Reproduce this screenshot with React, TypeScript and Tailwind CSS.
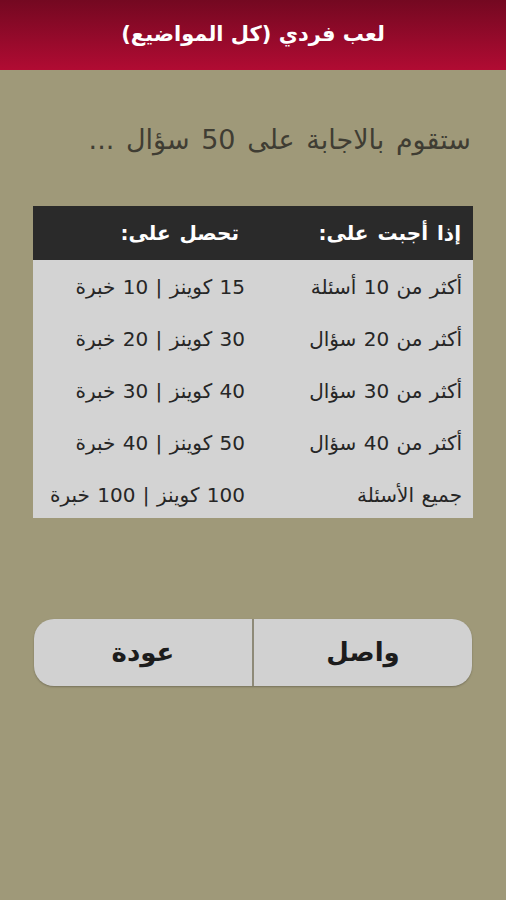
const rows = [
  { q: "أكثر من 10 أسئلة", r: "15 كوينز | 10 خبرة" },
  { q: "أكثر من 20 سؤال", r: "30 كوينز | 20 خبرة" },
  { q: "أكثر من 30 سؤال", r: "40 كوينز | 30 خبرة" },
  { q: "أكثر من 40 سؤال", r: "50 كوينز | 40 خبرة" },
  { q: "جميع الأسئلة", r: "100 كوينز | 100 خبرة" },
];

export default function App() {
  return (
    <div
      dir="rtl"
      className="flex h-[900px] w-[506px] flex-col bg-[#9f9979] font-['DejaVu_Sans',sans-serif]"
    >
      <header className="flex h-[70px] items-center justify-center bg-gradient-to-b from-[#740821] to-[#b10b33]">
        <h1 className="text-[21px] font-bold text-white">لعب فردي (كل المواضيع)</h1>
      </header>

      <p className="mr-[35px] mt-[50px] text-[27px] text-[#3f3d33] [word-spacing:3px]">
        ستقوم بالاجابة على 50 سؤال ...
      </p>

      <div className="mx-[33px] mt-[45px] bg-[#d3d3d3]">
        <div className="grid h-[54px] grid-cols-[218px_1fr] items-center bg-[#2a2a2a] text-[20px] font-bold text-white [word-spacing:2px]">
          <span className="pr-[12px]">إذا أجبت على:</span>
          <span className="pr-[16px]">تحصل على:</span>
        </div>
        {rows.map((row) => (
          <div
            key={row.q}
            className="grid h-[51.8px] grid-cols-[218px_1fr] items-center pt-1 text-[20px] text-[#262626] [word-spacing:1px]"
          >
            <span className="pr-[11px]">{row.q}</span>
            <span className="pr-[10px]">{row.r}</span>
          </div>
        ))}
      </div>

      <div className="mx-[34px] mt-[101px] flex h-[67px] overflow-hidden rounded-[20px] bg-[#d1d1d1] shadow-[0_1px_2px_rgba(0,0,0,0.25)]">
        <button className="flex-1 text-[26px] font-bold text-[#1c1c1c]">واصل</button>
        <div className="w-[2px] bg-[#8e8a78]" />
        <button className="flex-1 text-[26px] font-bold text-[#1c1c1c]">عودة</button>
      </div>
    </div>
  );
}
